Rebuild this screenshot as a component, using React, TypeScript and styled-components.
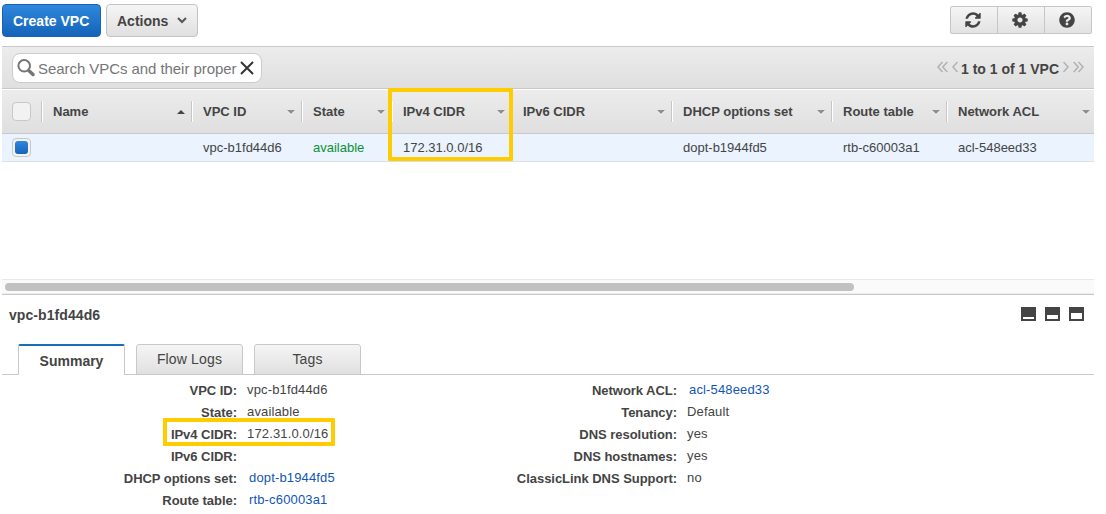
import React from 'react';
import styled, { createGlobalStyle, css } from 'styled-components';
import { FaQuestionCircle } from 'react-icons/fa';

const GlobalStyle = createGlobalStyle`
  * { box-sizing: border-box; }
  body {
    margin: 0;
    background: #fff;
    color: #444;
    font-family: "Liberation Sans", Arial, sans-serif;
    font-size: 13px;
    overflow: hidden;
  }
`;

const Page = styled.div`
  width: 1092px;
  height: 514px;
  margin-left: 2px;
  display: flex;
  flex-direction: column;
  overflow: hidden;
`;

const ActionBar = styled.header`
  height: 46px;
  flex: none;
  display: flex;
  align-items: flex-start;
  gap: 5px;
  padding: 4px 2px 0 0;
`;

const Button = styled.button<{ $primary?: boolean }>`
  height: 33px;
  width: ${(p) => (p.$primary ? '99px' : '92px')};
  padding: 0 10px;
  display: flex;
  align-items: center;
  justify-content: space-between;
  font: bold 14px "Liberation Sans", Arial, sans-serif;
  white-space: nowrap;
  border-radius: 4px;
  color: ${(p) => (p.$primary ? '#fff' : '#444')};
  border: 1px solid ${(p) => (p.$primary ? '#1a62b4' : '#c3c3c3')};
  background: ${(p) =>
    p.$primary
      ? 'linear-gradient(#2f87dc, #1464b9)'
      : 'linear-gradient(#f5f5f5, #e0e0e0)'};
`;

const IconGroup = styled.div`
  display: flex;
  width: 142px;
  height: 28px;
  margin: 2px 0 0 auto;
  border: 1px solid #c6c6c6;
  border-radius: 2px;
  background: linear-gradient(#f5f5f5, #e2e2e2);
`;

const IconButton = styled.button`
  flex: 1;
  padding: 0 2px 0 0;
  display: flex;
  align-items: center;
  justify-content: center;
  border: 0;
  background: none;
  color: #444;
  & + & { border-left: 1px solid #c6c6c6; }
`;

const Toolbar = styled.div`
  height: 43px;
  flex: none;
  display: flex;
  align-items: center;
  justify-content: space-between;
  padding: 0 10px;
  border-top: 1px solid #c8c8c8;
  border-bottom: 1px solid #c8c8c8;
  background: linear-gradient(#ececec, #dfdfdf);
`;

const SearchBox = styled.div`
  width: 250px;
  height: 30px;
  display: flex;
  align-items: center;
  padding: 0 5px 0 4px;
  border: 1px solid #ccc;
  border-radius: 8px;
  background: #fff;
`;

const Placeholder = styled.span`
  width: 199px;
  margin: 2px 3px 0 3px;
  font-size: 15px;
  line-height: 20px;
  letter-spacing: -0.06px;
  color: #767676;
  white-space: nowrap;
`;

const Pager = styled.div`
  display: flex;
  align-items: center;
  gap: 4px;
  height: 20px;
  color: #b2b2b2;
  b {
    color: #444;
    font-size: 14px;
    line-height: 20px;
    margin: 2px 0 0 -1px;
  }
  svg { margin-bottom: 2px; }
`;

const columns = '41px 150px 110px 90px 120px 160px 160px 115px 146px';

const HeaderRow = styled.div`
  position: relative;
  flex: none;
  display: grid;
  grid-template-columns: ${columns};
  align-items: center;
  height: 45px;
  border-top: 1px solid #fff;
  border-bottom: 1px solid #c8c8c8;
  background: linear-gradient(#ececec, #dfdfdf);
`;

const HeaderCell = styled.div<{ $last?: boolean }>`
  height: 21px;
  display: flex;
  align-items: center;
  justify-content: space-between;
  padding: 0 ${(p) => (p.$last ? '4px' : '7px')} 0 10px;
  font-weight: bold;
  line-height: 21px;
  white-space: nowrap;
  ${(p) =>
    !p.$last &&
    css`
      border-right: 1px solid #fff;
      box-shadow: inset -1px 0 #c6c6c6;
    `}
`;

const DataRow = styled.div`
  flex: none;
  display: grid;
  grid-template-columns: ${columns};
  align-items: center;
  height: 28px;
  border-bottom: 1px solid #dcdfe6;
  background: #eaf3fe;
`;

const DataCell = styled.div<{ $ok?: boolean }>`
  padding-left: 10px;
  line-height: 20px;
  color: ${(p) => (p.$ok ? '#0c9136' : '#444')};
`;

const CheckBox = styled.span<{ $checked?: boolean }>`
  display: block;
  flex: none;
  width: 19px;
  height: 19px;
  border: 1px solid #c8c8c8;
  border-radius: 4px;
  padding: 2px;
  background: #f2f2f2;
  &::before {
    content: '';
    display: ${(p) => (p.$checked ? 'block' : 'none')};
    width: 13px;
    height: 13px;
    border-radius: 3px;
    background: linear-gradient(#2f87dc, #1464b9);
  }
`;

const Arrow = styled.i<{ $up?: boolean }>`
  width: 0;
  height: 0;
  border: 4px solid transparent;
  ${(p) =>
    p.$up
      ? 'border-width: 0 4px 4px; border-bottom-color: #444;'
      : 'border-width: 4px 4px 0; border-top-color: #8f8f8f; filter: drop-shadow(0 1px #f8f8f8);'}
`;

const Highlight = styled.div<{ $area: 'column' | 'field' }>`
  position: absolute;
  border: 4px solid #fc0;
  border-radius: 1px;
  pointer-events: none;
  ${(p) =>
    p.$area === 'column'
      ? 'left: 386px; top: -2px; width: 125px; height: 73px;'
      : 'left: 161px; top: 43px; width: 172px; height: 28px;'}
`;

const EmptyArea = styled.div`
  height: 117px;
  flex: none;
`;

const ScrollTrack = styled.div`
  flex: none;
  height: 16px;
  padding: 3px;
  border-top: 1px solid #e8e8e8;
  border-bottom: 1px solid #c8c8c8;
  background: #fafafa;
  box-shadow: inset 0 -1px #ededed;
`;

const ScrollThumb = styled.div`
  width: 849px;
  height: 8px;
  border-radius: 4px;
  background: #c1c1c1;
`;

const DetailHeader = styled.div`
  flex: none;
  height: 49px;
  display: flex;
  justify-content: space-between;
  padding: 12px 10px 0 7px;
  font-size: 14px;
  font-weight: bold;
  line-height: 17px;
  letter-spacing: 0.08px;
`;

const Layouts = styled.div`
  display: flex;
  gap: 9px;
`;

const LayoutIcon = styled.i<{ $pane: number }>`
  width: 15px;
  height: 14px;
  display: flex;
  align-items: flex-end;
  padding: 2px;
  background: #444;
  &::after {
    content: '';
    width: 11px;
    height: ${(p) => p.$pane}px;
    background: #fff;
  }
`;

const Tabs = styled.nav`
  flex: none;
  display: flex;
  align-items: flex-start;
  gap: 11px;
  height: 31px;
  padding-left: 16px;
  box-shadow: inset 0 -1px #c8c8c8;
`;

const Tab = styled.div<{ $active?: boolean }>`
  width: 107px;
  height: 31px;
  border: 1px solid #c8c8c8;
  border-radius: 3px 3px 0 0;
  text-align: center;
  font-size: 14px;
  line-height: 28px;
  background: linear-gradient(#f5f5f5, #e0e0e0);
  letter-spacing: 0.15px;
  ${(p) =>
    p.$active &&
    css`
      border-top: 2px solid #146eba;
      border-bottom: 0;
      border-radius: 2px 2px 0 0;
      background: #fff;
      font-weight: bold;
      letter-spacing: 0;
      line-height: 31px;
    `}
`;

const Details = styled.div`
  position: relative;
  display: flex;
  padding-top: 7px;
`;

const FieldList = styled.dl<{ $labelWidth: number }>`
  margin: 0;
  display: grid;
  grid-template-columns: ${(p) => p.$labelWidth}px 205px;
  grid-auto-rows: 22px;
  column-gap: 10px;
`;

const Label = styled.dt`
  font-weight: bold;
  text-align: right;
  line-height: 17px;
  letter-spacing: -0.04px;
  white-space: nowrap;
`;

const Value = styled.dd<{ $link?: boolean }>`
  margin: 0;
  padding-left: ${(p) => (p.$link ? 2 : 0)}px;
  line-height: 15px;
  letter-spacing: 0.15px;
  white-space: nowrap;
  color: ${(p) => (p.$link ? '#1155b5' : '#444')};
`;

type Field = { label: string; value?: string; link?: boolean };

const leftFields: Field[] = [
  { label: 'VPC ID', value: 'vpc-b1fd44d6' },
  { label: 'State', value: 'available' },
  { label: 'IPv4 CIDR', value: '172.31.0.0/16' },
  { label: 'IPv6 CIDR' },
  { label: 'DHCP options set', value: 'dopt-b1944fd5', link: true },
  { label: 'Route table', value: 'rtb-c60003a1', link: true },
];

const rightFields: Field[] = [
  { label: 'Network ACL', value: 'acl-548eed33', link: true },
  { label: 'Tenancy', value: 'Default' },
  { label: 'DNS resolution', value: 'yes' },
  { label: 'DNS hostnames', value: 'yes' },
  { label: 'ClassicLink DNS Support', value: 'no' },
];

const headers = ['Name', 'VPC ID', 'State', 'IPv4 CIDR', 'IPv6 CIDR', 'DHCP options set', 'Route table', 'Network ACL'];
const row = ['', 'vpc-b1fd44d6', 'available', '172.31.0.0/16', '', 'dopt-b1944fd5', 'rtb-c60003a1', 'acl-548eed33'];

const Fields = ({ items, labelWidth }: { items: Field[]; labelWidth: number }) => (
  <FieldList $labelWidth={labelWidth}>
    {items.map((f) => (
      <React.Fragment key={f.label}>
        <Label>{f.label}:</Label>
        <Value $link={f.link}>{f.value}</Value>
      </React.Fragment>
    ))}
  </FieldList>
);

const Chevrons = ({ double, right }: { double?: boolean; right?: boolean }) => (
  <svg width={double ? 11 : 6} height="12" viewBox={double ? '0 0 11 12' : '0 0 6 12'} fill="none" stroke="currentColor" strokeWidth="1.5">
    <g transform={right ? `translate(${double ? 11 : 6} 0) scale(-1 1)` : undefined}>
      <path d="M5.500 1 1 6l4.500 5" />
      {double && <path d="M10.300 1 5.800 6l4.500 5" />}
    </g>
  </svg>
);

const RefreshIcon = () => (
  <svg width="18" height="18" viewBox="0 0 1536 1792" fill="currentColor">
    <path d="M1511 1056q0 5-1 7-64 268-268 434.500T764 1664q-146 0-282.500-55T238 1452l-129 129q-19 19-45 19t-45-19-19-45v-448q0-26 19-45t45-19h448q26 0 45 19t19 45-19 45l-137 137q71 66 161 102t187 36q134 0 250-65t186-179q11-17 53-117 8-23 30-23h192q13 0 22.500 9.500t9.500 22.500zM1536 256v448q0 26-19 45t-45 19h-448q-26 0-45-19t-19-45 19-45l138-138Q969 384 768 384q-134 0-250 65T332 628q-11 17-53 117-8 23-30 23H50q-13 0-22.500-9.500T18 736v-7q65-268 270-434.500T768 128q146 0 284 55.500T1297 340l130-129q19-19 45-19t45 19 19 45z" />
  </svg>
);

const GearIcon = () => (
  <svg width="18" height="18" viewBox="0 0 1536 1792" fill="currentColor">
    <path d="M1024 896q0-106-75-181t-181-75-181 75-75 181 75 181 181 75 181-75 75-181zm512-109v222q0 12-8 23t-20 13l-185 28q-19 54-39 91 35 50 107 138 10 12 10 25t-9 23q-27 37-99 108t-94 71q-12 0-26-9l-138-108q-44 23-91 38-16 136-29 186-7 28-36 28H657q-14 0-24.500-8.500T621 1634l-28-184q-49-16-90-37l-141 107q-10 9-25 9-14 0-25-11-126-114-165-168-7-10-7-23 0-12 8-23 15-21 51-66.500t54-70.500q-27-50-41-99L29 1041q-13-2-21-12.500T0 1005V783q0-12 8-23t19-13l186-28q14-46 39-92-40-57-107-138-10-12-10-24 0-10 9-23 26-36 98.500-107.500T337 263q13 0 26 10l138 107q44-23 91-38 16-136 29-186 7-28 36-28h222q14 0 24.500 8.500T915 158l28 184q49 16 90 37l142-107q9-9 24-9 13 0 25 10 129 119 165 170 7 8 7 22 0 12-8 23-15 21-51 66.500t-54 70.500q26 50 41 98l183 28q13 2 21 12.500t8 23.500z" />
  </svg>
);

export default function App() {
  return (
    <Page>
      <GlobalStyle />
      <ActionBar>
        <Button $primary>Create VPC</Button>
        <Button>
          Actions
          <svg width="10" height="7" viewBox="0 0 10 7" fill="none" stroke="#555" strokeWidth="2">
            <path d="m1 1 4 4 4-4" />
          </svg>
        </Button>
        <IconGroup>
          <IconButton aria-label="Refresh"><RefreshIcon /></IconButton>
          <IconButton aria-label="Settings"><GearIcon /></IconButton>
          <IconButton aria-label="Help"><FaQuestionCircle size={16} /></IconButton>
        </IconGroup>
      </ActionBar>

      <Toolbar>
        <SearchBox>
          <svg width="18" height="18" viewBox="0 0 18 18" fill="none" stroke="#757575">
            <circle cx="7.200" cy="6.800" r="5.800" strokeWidth="2" />
            <path d="m12 11.800 4 3.700" strokeWidth="3.400" strokeLinecap="round" />
          </svg>
          <Placeholder>Search VPCs and their proper</Placeholder>
          <svg width="14" height="14" viewBox="0 0 14 14" stroke="#333" strokeWidth="2">
            <path d="m1 1 12 12M13 1 1 13" />
          </svg>
        </SearchBox>
        <Pager>
          <Chevrons double />
          <Chevrons />
          <b>1 to 1 of 1 VPC</b>
          <Chevrons right />
          <Chevrons double right />
        </Pager>
      </Toolbar>

      <HeaderRow>
        <HeaderCell><CheckBox /></HeaderCell>
        {headers.map((h, i) => (
          <HeaderCell key={h} $last={i === headers.length - 1}>
            {h}
            <Arrow $up={i === 0} />
          </HeaderCell>
        ))}
        <Highlight $area="column" />
      </HeaderRow>
      <DataRow>
        <DataCell><CheckBox $checked /></DataCell>
        {row.map((v, i) => (
          <DataCell key={i} $ok={i === 2}>{v}</DataCell>
        ))}
      </DataRow>
      <EmptyArea />
      <ScrollTrack><ScrollThumb /></ScrollTrack>

      <DetailHeader>
        vpc-b1fd44d6
        <Layouts>
          <LayoutIcon $pane={2} />
          <LayoutIcon $pane={4} />
          <LayoutIcon $pane={6} />
        </Layouts>
      </DetailHeader>
      <Tabs>
        <Tab $active>Summary</Tab>
        <Tab>Flow Logs</Tab>
        <Tab>Tags</Tab>
      </Tabs>
      <Details>
        <Fields items={leftFields} labelWidth={235} />
        <Fields items={rightFields} labelWidth={225} />
        <Highlight $area="field" />
      </Details>
    </Page>
  );
}
